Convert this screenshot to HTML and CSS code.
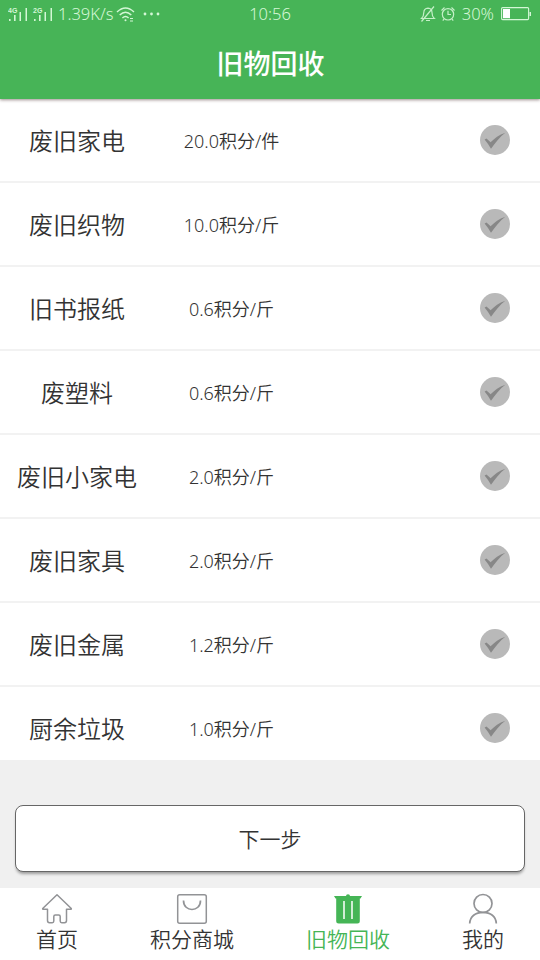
FILE: index.html
```html
<!DOCTYPE html>
<html lang="zh-CN">
<head>
<meta charset="utf-8">
<title>旧物回收</title>
<link rel="stylesheet" href="styles.css">
</head>
<body>
<svg class="defs" width="0" height="0" aria-hidden="true">
  <symbol id="check" viewBox="0 0 30 30">
    <circle cx="15" cy="15" r="15" fill="#b9b9b9"/>
    <path d="M4.600 14.600L6.500 13.500L10.600 17.300C14.500 13.400 19 10 25.300 7.800C20 11.800 15.400 17.500 11 23.800C9.200 20.700 7 17.600 4.600 14.600Z" fill="#878787"/>
  </symbol>
</svg>
<header class="header">
  <div class="status">
    <div class="status-left">
      <svg width="47" height="16" viewBox="0 0 47 16" fill="#d4f7d6">
        <g id="bars"><path d="M1 13h1.600v2H1zM6 9h1.600v6H6zM11.500 6H13v9h-1.500zM17.500 2H19v13h-1.500z"/></g>
        <use href="#bars" x="25"/>
        <g class="net"><text x="0" y="6.500">4G</text><text x="25" y="6.500">2G</text></g>
      </svg>
      <span class="speed">1.39K/s</span>
      <svg class="wifi" width="20" height="17" viewBox="0 0 20 17" fill="none" stroke="#d4f7d6" stroke-width="1.500">
        <path d="M1 6Q9.500-2 18 6M3.700 9Q9.500 3.500 15.300 9M6.400 12Q9.500 9 12.600 12"/><circle cx="9.500" cy="14.300" r="1" fill="#d4f7d6" stroke="none"/><path d="M14 12.500h3M14 15h3" stroke-width="1"/>
      </svg>
      <svg class="dots" width="18" height="4" viewBox="0 0 18 4" fill="#d4f7d6"><circle cx="2" cy="2" r="1.400"/><circle cx="8.500" cy="2" r="1.400"/><circle cx="15" cy="2" r="1.400"/></svg>
    </div>
    <span class="time">10:56</span>
    <div class="status-right">
      <svg width="16" height="16" viewBox="0 0 16 16" fill="none" stroke="#c5f0c8" stroke-width="1.200"><path d="M1.500 12.500Q3.800 10.500 3.800 6.500Q4 2.500 8 2.200Q12 2.500 12 6.500Q12 10.500 14.300 12.500ZM6 14.500h4M14 .5L1.500 15.500"/></svg>
      <svg class="alarm" width="16" height="16" viewBox="0 0 16 16" fill="none" stroke="#c5f0c8" stroke-width="1.200"><circle cx="8" cy="8.300" r="5.700"/><path d="M8 4.800v3.700h3M1.500 4.500L4.500 1.500M14.500 4.500L11.500 1.500M4 13l-1.200 1.700M12 13l1.200 1.700"/></svg>
      <span class="percent">30%</span>
      <svg class="battery" width="31" height="14" viewBox="0 0 31 14"><rect x=".6" y=".6" width="27" height="12" rx="1" fill="none" stroke="#d4f7d6" stroke-width="1.100"/><path d="M2 2h7v9.200H2z" fill="#fff"/><path d="M28.500 5h1.500v4h-1.500z" fill="#d4f7d6"/></svg>
    </div>
  </div>
  <h1 class="title">旧物回收</h1>
</header>
<main class="list">
  <div class="row"><span class="name">废旧家电</span><span class="price">20.0积分/件</span><svg class="check"><use href="#check"/></svg></div>
  <div class="row"><span class="name">废旧织物</span><span class="price">10.0积分/斤</span><svg class="check"><use href="#check"/></svg></div>
  <div class="row"><span class="name">旧书报纸</span><span class="price">0.6积分/斤</span><svg class="check"><use href="#check"/></svg></div>
  <div class="row"><span class="name">废塑料</span><span class="price">0.6积分/斤</span><svg class="check"><use href="#check"/></svg></div>
  <div class="row"><span class="name">废旧小家电</span><span class="price">2.0积分/斤</span><svg class="check"><use href="#check"/></svg></div>
  <div class="row"><span class="name">废旧家具</span><span class="price">2.0积分/斤</span><svg class="check"><use href="#check"/></svg></div>
  <div class="row"><span class="name">废旧金属</span><span class="price">1.2积分/斤</span><svg class="check"><use href="#check"/></svg></div>
  <div class="row"><span class="name">厨余垃圾</span><span class="price">1.0积分/斤</span><svg class="check"><use href="#check"/></svg></div>
</main>
<section class="action"><button class="next">下一步</button></section>
<nav class="tabs">
  <a class="tab">
    <svg width="32" height="32" viewBox="0 0 32 32" fill="none" stroke="#929396" stroke-width="1.500" stroke-linejoin="round"><path d="M16 1.700L1.700 15.500Q1.500 16.300 2.500 16.300H6.500V27.500Q6.500 29.700 8.500 29.700H11.300Q12.800 29.700 12.800 28V23.500Q12.800 22 14.300 22H17.700Q19.200 22 19.200 23.500V28Q19.200 29.700 20.700 29.700H23.500Q25.500 29.700 25.500 27.500V16.300H29.500Q30.500 16.300 30.300 15.500Z"/></svg>
    <span>首页</span>
  </a>
  <a class="tab">
    <svg width="32" height="32" viewBox="0 0 32 32" fill="none" stroke="#929396" stroke-width="1.500"><rect x="1.700" y="1.700" width="28.600" height="28.600" rx="2"/><path d="M7.500 7.500C7.500 19.500 24.500 19.500 24.500 7.500" stroke-width="1.700"/></svg>
    <span>积分商城</span>
  </a>
  <a class="tab active">
    <svg width="32" height="32" viewBox="0 0 32 32"><path d="M2 3H14Q14 1.300 16 1.300T18 3H30L28.500 5.500H27.800V28Q27.800 30.500 25.300 30.500H6.700Q4.200 30.500 4.200 28V5.500H3.500Z" fill="#45b556"/><path d="M12 8v18M20 8v18" stroke="#e9f7eb" stroke-width="1.700"/></svg>
    <span>旧物回收</span>
  </a>
  <a class="tab">
    <svg width="32" height="32" viewBox="0 0 32 32" fill="none" stroke="#929396" stroke-width="1.700"><circle cx="16" cy="10.500" r="9"/><path d="M2.700 30.500C3 23.500 8.500 19.300 16 19.300S29 23.500 29.300 30.500"/></svg>
    <span>我的</span>
  </a>
</nav>
</body>
</html>
```
FILE: styles.css
```css
* { box-sizing: border-box; }
body {
  margin: 0;
  width: 540px;
  height: 960px;
  overflow: hidden;
  display: flex;
  flex-direction: column;
  background: #f0f0f0;
  color: #333;
  font-family: "Noto Sans", "Noto Sans CJK SC", sans-serif;
  font-weight: 350;
}
svg { display: block; flex: none; }
.defs { position: absolute; }
.header {
  flex: none;
  height: 99px;
  background: #47b457;
  color: #fff;
  box-shadow: 0 1px 3px rgba(60, 30, 30, .5);
  position: relative;
  z-index: 1;
}
.status {
  height: 28px;
  display: grid;
  grid-template-columns: 1fr auto 1fr;
  padding: 0 8px;
  align-items: center;
  color: #d4f7d6;
  font-size: 16.500px;
  line-height: 28px;
}
.status-left, .status-right { display: flex; align-items: center; }
.status-right { justify-content: flex-end; }
.net { font: bold 7px "Liberation Sans", sans-serif; }
.speed { margin-left: 3px; width: 57px; white-space: nowrap; }
.wifi { margin-left: 1px; }
.dots { margin-left: 7px; }
.alarm { margin-left: 4px; }
.percent { margin-left: 6px; }
.battery { margin-left: 7px; }
.title {
  margin: 0;
  padding-left: 1px;
  text-align: center;
  font-size: 27px;
  line-height: 72px;
  font-weight: 500;
}
.list {
  flex: none;
  height: 661px;
  overflow: hidden;
  background: #fff;
}
.row {
  height: 84px;
  border-bottom: 2px solid #f2f2f2;
  display: grid;
  grid-template-columns: 154px 154px 1fr;
  align-items: center;
  text-align: center;
}
.name { font-size: 24px; padding-bottom: 2px; }
.price { font-size: 18px; padding: 0 0 1px 1px; }
.check { width: 30px; height: 30px; justify-self: end; margin: 0 30px 1px 0; }
.action { flex: none; height: 128px; padding: 45px 15px 0; }
.next {
  display: block;
  width: 100%;
  height: 67px;
  padding: 0 0 2px;
  border: 1px solid #666;
  border-radius: 8px;
  background: #fff;
  box-shadow: 0 3px 3px -1px rgba(0, 0, 0, .35);
  color: #333;
  font: inherit;
  font-size: 21px;
}
.tabs {
  flex: 1;
  background: #fff;
  display: flex;
  justify-content: space-between;
  padding: 5px 36px 0;
}
.tab {
  display: flex;
  flex-direction: column;
  align-items: center;
  font-size: 21px;
  line-height: 28px;
}
.active { color: #45b556; }
```
